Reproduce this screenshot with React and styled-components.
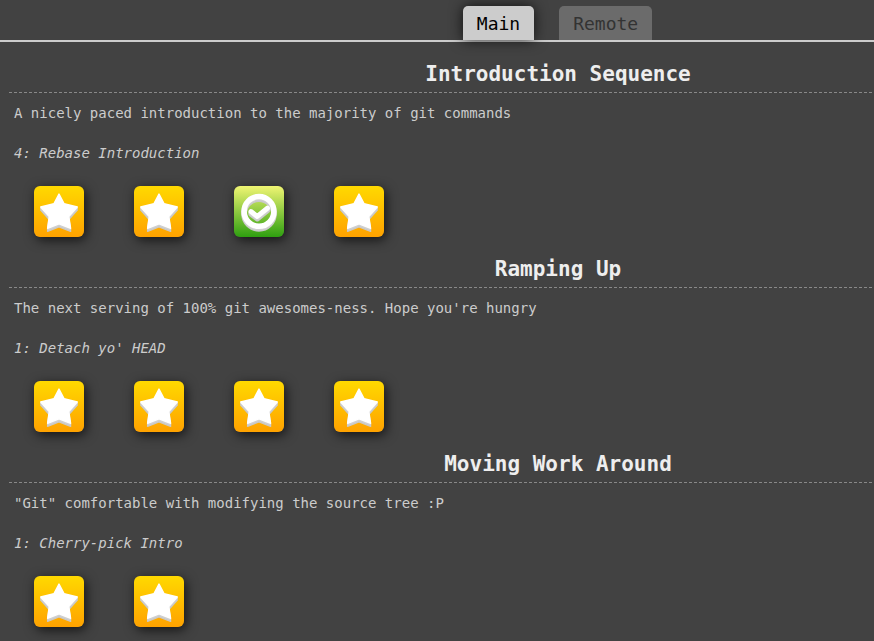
import React, { useState } from "react";
import styled, { createGlobalStyle } from "styled-components";

const GlobalStyle = createGlobalStyle`
  * { box-sizing: border-box; }
  html, body { margin: 0; background: #424242; }
  body {
    overflow: hidden;
    color: #ccc;
    font: 14px/20px "DejaVu Sans Mono", "Liberation Mono", monospace;
  }
  button { font: inherit; border: 0; cursor: pointer; }
`;

const Page = styled.main`
  min-width: 1115px;
`;

const TabBar = styled.nav`
  display: flex;
  justify-content: center;
  gap: 25px;
  padding-top: 6px;
  border-bottom: 2px solid #ccc;
`;

const Tab = styled.button`
  height: 34px;
  padding: 2px 14px 0;
  border-radius: 5px 5px 0 0;
  font-size: 18px;
  line-height: 32px;
  color: ${(p) => (p.$selected ? "#000" : "#333")};
  background: ${(p) => (p.$selected ? "#ccc" : "#6b6b6b")};
  box-shadow: ${(p) => (p.$selected ? "0 0 14px rgba(0, 0, 0, 0.75)" : "none")};
`;

const Sequences = styled.div`
  padding: 14px 8px 0 9px;
`;

const Section = styled.section`
  padding-bottom: 14px;
`;

const Title = styled.h2`
  margin: 0;
  border-bottom: 1px dashed #888;
  color: #eee;
  font-size: 21px;
  line-height: 36px;
  text-align: center;
`;

const Description = styled.p`
  margin: 10px 5px 20px;
`;

const LevelName = styled.p`
  margin: 0 5px 23px;
  font-style: italic;
`;

const Levels = styled.div`
  display: flex;
  gap: 50px;
  padding-left: 25px;
`;

const Level = styled.button`
  width: 50px;
  height: 51px;
  padding: 0;
  border-radius: 6px;
  background: ${(p) =>
    p.$solved
      ? "linear-gradient(#f0f573, #2e9f10)"
      : "linear-gradient(#ffd900, #ffa200)"};
  box-shadow: 2px 3px 12px rgba(0, 0, 0, 0.7);

  svg { display: block; }
`;

const STAR =
  "M25 8 L30 17.6 L43.3 21 L34.8 30.5 L36.6 42.3 L25 37.8 L13.6 42.3 L15.2 30.5 L6.7 21 L20 17.6 Z";

function StarShape({ color }) {
  return <path d={STAR} fill={color} stroke={color} strokeWidth="1.4" strokeLinejoin="round" />;
}

function StarIcon() {
  return (
    <svg width="50" height="51" viewBox="0 0 50 51" aria-hidden="true">
      <g transform="translate(0 3)"><StarShape color="#c9c9c9" /></g>
      <g transform="translate(0 1.5)"><StarShape color="#d0d0d0" /></g>
      <StarShape color="#fff" />
    </svg>
  );
}

function CheckShape({ color }) {
  return (
    <g fill="none" stroke={color}>
      <circle cx="25" cy="25.4" r="14.9" strokeWidth="5.6" />
      <path d="M17 25.6 L23.3 30.4 L33.4 22.2" strokeWidth="5" strokeLinecap="round" strokeLinejoin="round" />
    </g>
  );
}

function CheckIcon() {
  return (
    <svg width="50" height="51" viewBox="0 0 50 51" aria-hidden="true">
      <g transform="translate(0 2.6)"><CheckShape color="#c9c9c9" /></g>
      <g transform="translate(0 1.3)"><CheckShape color="#d0d0d0" /></g>
      <CheckShape color="#fff" />
    </svg>
  );
}

const TABS = ["Main", "Remote"];

const SEQUENCES = [
  {
    title: "Introduction Sequence",
    description: "A nicely paced introduction to the majority of git commands",
    level: "4: Rebase Introduction",
    solved: [false, false, true, false],
  },
  {
    title: "Ramping Up",
    description: "The next serving of 100% git awesomes-ness. Hope you're hungry",
    level: "1: Detach yo' HEAD",
    solved: [false, false, false, false],
  },
  {
    title: "Moving Work Around",
    description: "\"Git\" comfortable with modifying the source tree :P",
    level: "1: Cherry-pick Intro",
    solved: [false, false],
  },
];

export default function App() {
  const [tab, setTab] = useState("Main");
  return (
    <>
      <GlobalStyle />
      <Page>
        <TabBar>
          {TABS.map((name) => (
            <Tab key={name} type="button" $selected={name === tab} aria-pressed={name === tab} onClick={() => setTab(name)}>
              {name}
            </Tab>
          ))}
        </TabBar>
        <Sequences>
          {SEQUENCES.map((s) => (
            <Section key={s.title}>
              <Title>{s.title}</Title>
              <Description>{s.description}</Description>
              <LevelName>{s.level}</LevelName>
              <Levels>
                {s.solved.map((solved, i) => (
                  <Level key={i} type="button" $solved={solved} aria-label={`Level ${i + 1}`}>
                    {solved ? <CheckIcon /> : <StarIcon />}
                  </Level>
                ))}
              </Levels>
            </Section>
          ))}
        </Sequences>
      </Page>
    </>
  );
}
